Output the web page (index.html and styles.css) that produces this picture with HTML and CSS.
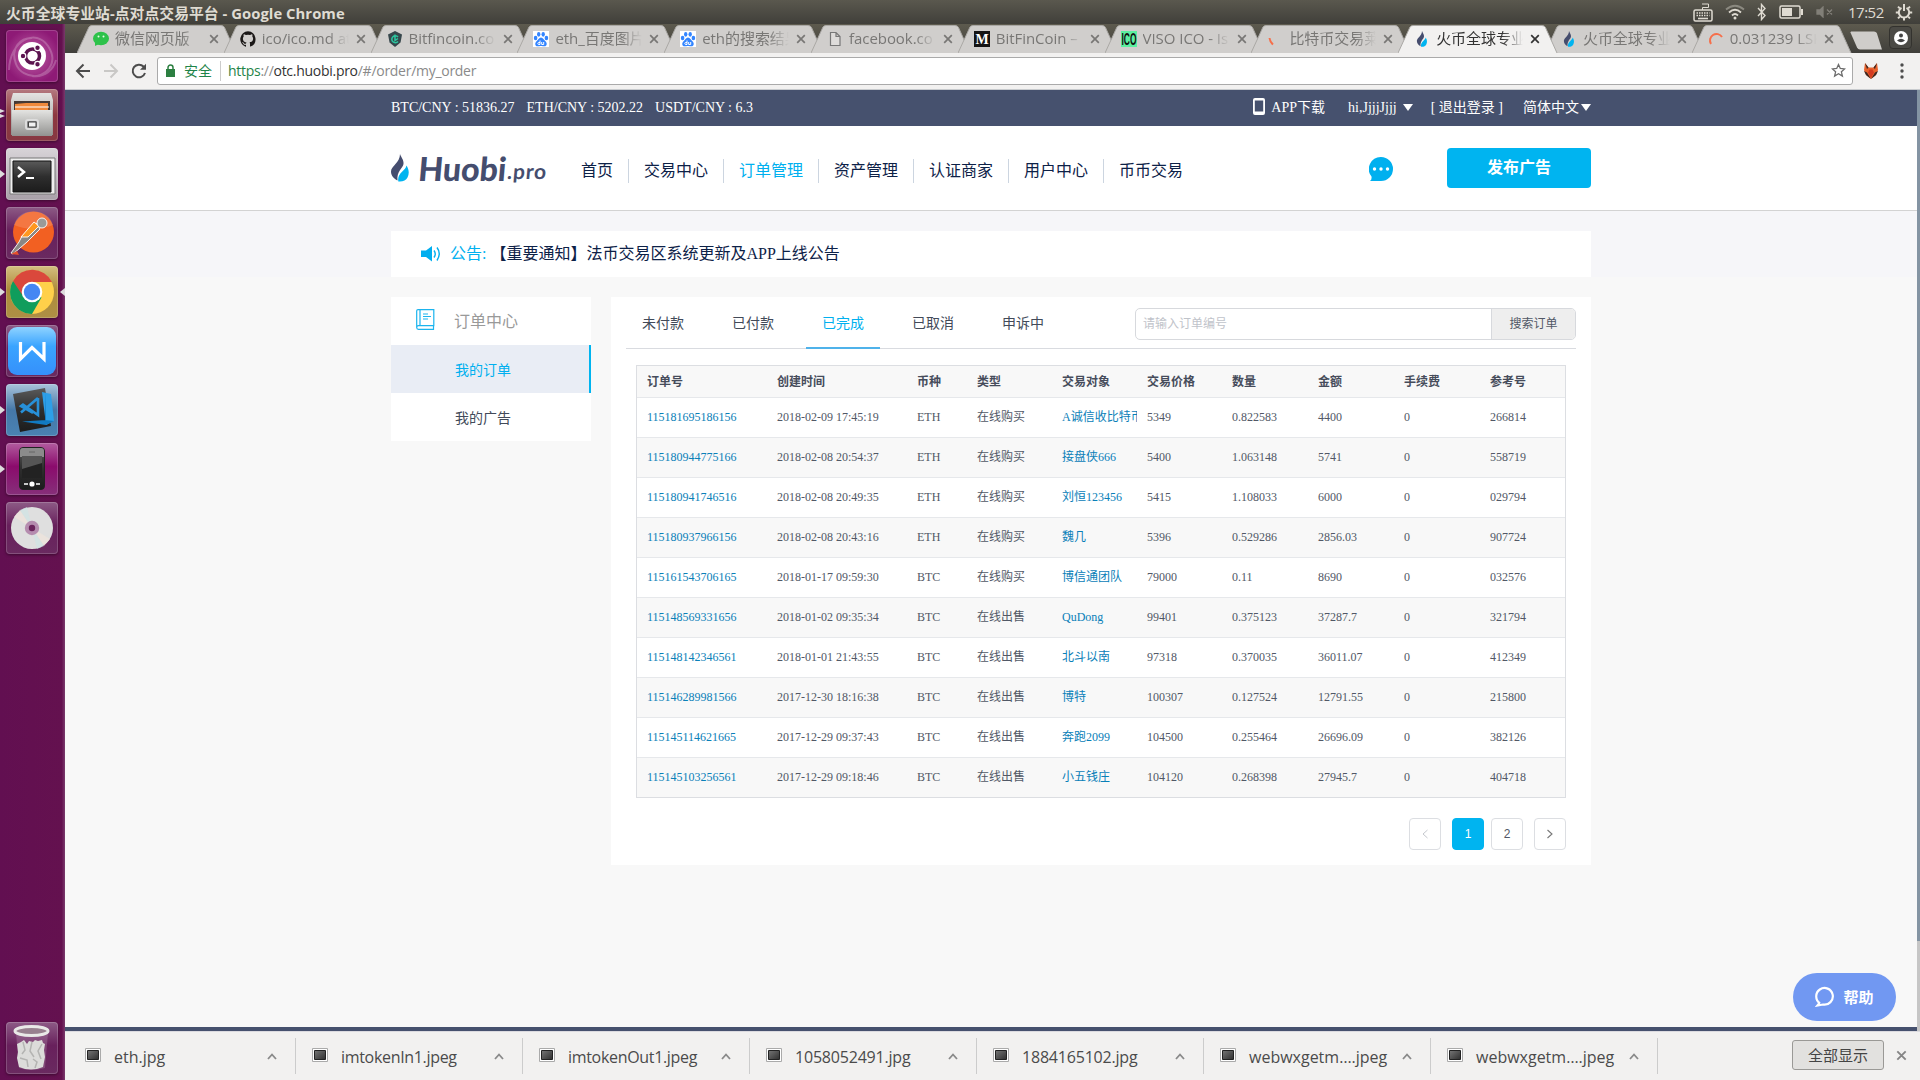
FILE: index.html
```html
<!DOCTYPE html>
<html lang="zh-CN">
<head>
<meta charset="utf-8">
<title>火币全球专业站-点对点交易平台</title>
<link rel="stylesheet" href="styles.css">
</head>
<body>
<svg class="defs" width="0" height="0">
  <defs>
    <linearGradient id="metal" x1="0" y1="0" x2="0" y2="1"><stop offset="0" stop-color="#e4e4e2"/><stop offset="1" stop-color="#929290"/></linearGradient>
    <linearGradient id="dark" x1="0" y1="0" x2="0" y2="1"><stop offset="0" stop-color="#5a5a5a"/><stop offset=".5" stop-color="#2e2e2e"/><stop offset="1" stop-color="#1c1c1c"/></linearGradient>
    <linearGradient id="photo" x1="0" y1="0" x2="1" y2="1"><stop offset="0" stop-color="#777"/><stop offset="1" stop-color="#2e2e2e"/></linearGradient>
    <linearGradient id="wps" x1="0" y1="0" x2="0" y2="1"><stop offset="0" stop-color="#8fd3ff"/><stop offset=".4" stop-color="#3aa4ff"/><stop offset="1" stop-color="#3590fb"/></linearGradient>
    <symbol id="flame" viewBox="0 0 18 28"><path fill="#454d6e" d="M9 0c1 3 4 6 3.500 10C12 14 5.500 17 6.500 26.500 2.500 24.500 0 21.500 0 17.500 0 12 9 9 9 0z"/><path class="flame-drop" d="M15.500 11.500c2.500 4 3 8 1 12-1.500 3-5 4.500-9.200 4-.6-5 1-7 4-10 2-2 3.700-3.600 4.200-6z"/></symbol>
    <symbol id="paw" viewBox="0 0 16 16"><path fill="#fff" d="M0 0h16v16H0z"/><g fill="#3385ff"><ellipse cx="2.600" cy="7" rx="1.800" ry="2.300"/><ellipse cx="5.700" cy="3.300" rx="1.700" ry="2.400"/><ellipse cx="10.200" cy="3.300" rx="1.700" ry="2.400"/><ellipse cx="13.400" cy="7" rx="1.800" ry="2.300"/><path d="M8 6.500c2 0 3 2.500 4.700 4s1.300 4.800-1.200 4.800c-1.500 0-2-.4-3.500-.4s-2 .4-3.500.4C2 15.300 1.600 12 3.300 10.500S6 6.500 8 6.500z"/></g><path fill="none" stroke="#fff" d="M7 9.500v4H5.800a1 1 0 0 1 0-2H7M8.700 11v2.500h2V11"/></symbol>
    <symbol id="close" viewBox="0 0 10 10"><path d="M1.200 1.200l7.600 7.600M8.800 1.200L1.200 8.800" stroke="currentColor" stroke-width="1.700"/></symbol>
    <symbol id="thumb" viewBox="0 0 16 14"><path fill="#fff" stroke="#aaa" d="M.5.5h15v13H.5z"/><path fill="url(#photo)" stroke="#222" d="M2.500 2.500h11v9h-11z"/></symbol>
    <symbol id="caret" viewBox="0 0 10 7"><path d="M1 6l4-4.500L9 6" fill="none" stroke="#8a8a8a" stroke-width="1.800"/></symbol>
    <symbol id="shape" viewBox="0 0 160 28" preserveAspectRatio="none"><path d="M0 28L12 2Q13 .5 15 .5H144Q146.500.5 147.500 2.500L159 28" stroke="#aaa8a5"/></symbol>
  </defs>
</svg>

<header class="menubar">
  <span class="window-title">火币全球专业站-点对点交易平台 - Google Chrome</span>
  <div class="tray">
    <svg width="20" height="24" viewBox="0 0 20 24" fill="none" stroke="#dfdbd2"><rect x="1" y="10" width="18" height="11" rx="1.500" stroke-width="1.500"/><path d="M9.500 10V7.500h6V4H9" /><path d="M3.500 13h13M3.500 15.500h13" stroke-width="1.600" stroke-dasharray="1.500 1"/><path d="M5 18.500h10" stroke-width="1.600"/></svg>
    <svg width="20" height="16" viewBox="0 0 20 16" fill="none" stroke-width="1.800"><path d="M1 5.500Q10-2 19 5.500" stroke="#8b8980"/><path d="M4 8.500Q10 3 16 8.500M7 11.500q3-3 6 0" stroke="#dfdbd2"/><circle cx="10" cy="14" r="1.500" fill="#dfdbd2"/></svg>
    <svg class="bluetooth" width="10" height="18" viewBox="0 0 10 18" fill="none" stroke="#dfdbd2" stroke-width="1.400"><path d="M1 5l7 7.500-3.500 4v-15l3.500 4L1 13"/></svg>
    <svg class="battery" width="25" height="14" viewBox="0 0 25 14"><rect x="1" y="1" width="20" height="12" rx="1.500" fill="none" stroke="#dfdbd2" stroke-width="1.500"/><path d="M3 3h10v8H3zM22 4h2v6h-2z" fill="#dfdbd2"/></svg>
    <svg width="18" height="12" viewBox="0 0 18 12" fill="#817f78" stroke="#817f78"><path d="M1 4h3l3-3v10L4 8H1zM11 3.500l5 5M16 3.500l-5 5" stroke-width="1.300"/></svg>
    <span class="clock">17:52</span>
    <svg class="gear" width="18" height="18" viewBox="0 0 18 18" fill="none" stroke="#dfdbd2" stroke-width="2"><path d="M6.500 4.800a5.200 5.200 0 1 0 5 0M9 1v7"/><path d="M9 14.500v3M.8 9.500h3M14.200 9.500h3M3 3.600l1.800 1.800M15 3.600l-1.800 1.800M3 15.400l1.800-1.800M15 15.400l-1.800-1.800"/></svg>
  </div>
</header>

<div class="desktop">
  <aside class="launcher">
    <div class="tile tile-ubuntu"><svg viewBox="0 0 52 52"><g fill="none" stroke="#fff" stroke-opacity=".22" stroke-width="2"><path d="M3 40C4 10 30-2 42 16s-4 32-16 30M50 30C44 52 16 50 10 34S14 8 26 8"/></g><circle cx="26" cy="26" r="14" fill="#fff"/><circle cx="26.500" cy="26" r="7" fill="none" stroke="#5c1450" stroke-width="3.500"/><g fill="#5c1450" stroke="#fff" stroke-width="1.200"><circle cx="17" cy="26" r="2.800"/><circle cx="31.500" cy="17.800" r="2.800"/><circle cx="31.500" cy="34.200" r="2.800"/></g></svg></div>
    <div class="tile tile-files left-two"><svg viewBox="0 0 52 52"><path d="M7 4h38l2 7v35H5V11z" fill="url(#metal)"/><path d="M8 12h36v10H8z" fill="#453a35"/><path d="M9 15l11-1 22 0v8H9z" fill="#f08a3c"/><path d="M9 18h34" stroke="#fff" stroke-width="1.200"/><path d="M6 21h40v26H6z" fill="url(#metal)"/><rect x="20" y="31" width="12" height="9" rx="2" fill="#888" stroke="#ddd" stroke-width="2"/><path d="M22.500 33h7.500v5h-7.500z" fill="#f2f2f2" stroke="#444"/></svg></div>
    <div class="tile tile-terminal left-one"><svg viewBox="0 0 52 52"><path d="M4 10h45v36H4z" fill="#eee" stroke="#777"/><path d="M7 13h38v31H7z" fill="url(#dark)" stroke="#111"/><path d="M12 19l6 5-6 5" fill="none" stroke="#fff" stroke-width="2.500"/><path d="M20 30h8" stroke="#fff" stroke-width="2"/></svg></div>
    <div class="tile tile-postman"><svg viewBox="0 0 52 52"><circle cx="27.500" cy="25" r="20.500" fill="#f26022"/><path d="M8 18Q12 4 28 4.500 43 5 47 18 28 26 8 18z" fill="#fff" opacity=".15"/><g stroke="#fff" stroke-width=".9"><path d="M16 29L30 16l4 6-13 13-14 12-2-1 8-11z" fill="#8b8784"/><path d="M15 30L28 15l5 4-11 11z" fill="#ff981f"/><circle cx="36" cy="16" r="5" fill="#9a9a98"/></g><path d="M5 47l6-3 2 4z" fill="#e8512c"/></svg></div>
    <div class="tile tile-chrome left-one right-one"><svg viewBox="0 0 52 52"><circle cx="26" cy="26" r="22" fill="#ffd04a"/><path d="M7 15A22 22 0 0 0 26 48l9.500-16.500L26 26z" fill="#109d5c"/><path d="M7 15A22 22 0 0 1 46 16H26a10 10 0 0 0-9 14z" fill="#da483c"/><circle cx="26" cy="26" r="10.300" fill="#fff"/><circle cx="26" cy="26" r="8.200" fill="#4587f3"/></svg></div>
    <div class="tile tile-wps"><svg viewBox="0 0 52 52"><rect x="2" y="2" width="48" height="48" rx="9" fill="url(#wps)"/><path d="M14.500 17v17L26 22.500 38 34V17" fill="none" stroke="#fff" stroke-width="3.200"/></svg></div>
    <div class="tile tile-code left-one"><svg viewBox="0 0 52 52"><path d="M7 10L39 4l6 38-31 6z" fill="url(#dark)"/><path d="M36 8l9 2 3 27-8 4z" fill="#2d9fe8"/><path d="M16 37.500l24-1.500V8l-1 28 9 1-8 4z" fill="#117ac2"/><path d="M32 14v17L17 20.500l-2 1.500 12 7M15 28.500L32 14" fill="none" stroke="#2790d8" stroke-width="2.600"/></svg></div>
    <div class="tile tile-phone left-one"><svg viewBox="0 0 52 52"><rect x="13.500" y="4.500" width="25" height="42" rx="3.500" fill="url(#dark)" stroke="#222"/><path d="M14 8q0-3 3-3h18q3 0 3 3v6H14z" fill="#8b8b8b"/><path d="M23 9h6" stroke="#666"/><path d="M16 13h20v22H16z" fill="#222"/><path d="M16 13h20v7L16 26z" fill="#555"/><path d="M18 41h4M30 41h4" stroke="#fff" stroke-width="1.600"/><circle cx="26" cy="41" r="2.600" fill="#fff"/></svg></div>
    <div class="tile tile-disc"><svg viewBox="0 0 52 52"><circle cx="26" cy="26" r="21" fill="#dfdfdf"/><path d="M26 26L8 15l6-7zM26 26l18 11-6 7z" fill="#f0e4dc" opacity=".7"/><path d="M26 26L14 8l7-3zM26 26l12 18-7 3z" fill="#cfe4e4" opacity=".7"/><circle cx="26" cy="26" r="5.200" fill="#6b245c" stroke="#b58caf" stroke-width="4"/></svg></div>
    <div class="tile tile-trash"><svg viewBox="0 0 52 52"><path d="M10 11l3 35q13 4 26 0l3-35z" fill="#fff" opacity=".16"/><path d="M11 22l4-2 3-2 3 4 2-3 4 1 2-2 3 1 4-1 1 3 2 1-1 6 1 7-2 10q-12 5-24 0l-2-9 1-6z" fill="#dcdcda"/><path d="M17 20l2 8-3 4M26 20l-2 9 4 6M36 22l-4 7 3 8M14 36l7 2 1 7M27 37l4 3-2 6" stroke="#b4b4b2" fill="none" stroke-width="1.500"/><ellipse cx="25.500" cy="9" rx="16.500" ry="4.500" fill="#98808f" stroke="#e9e9e7" stroke-width="3"/></svg></div>
  </aside>

  <div class="browser">
    <div class="tabstrip">
      <div class="tab"><svg class="shape"><use href="#shape"/></svg><svg class="fav" viewBox="0 0 16 16"><ellipse cx="8" cy="7.500" rx="8" ry="6.800" fill="#2dc24a"/><path d="M2 11l0 4 4-2z" fill="#2dc24a"/><g fill="#e8ffe8"><circle cx="5.500" cy="5.500" r="1"/><circle cx="10.500" cy="5.500" r="1"/></g></svg><span class="label">微信网页版</span><svg class="x"><use href="#close"/></svg></div>
      <div class="tab"><svg class="shape"><use href="#shape"/></svg><svg class="fav" viewBox="0 0 16 16"><path fill="#1b1817" d="M8 .2a8 8 0 0 0-2.500 15.500c.4.100.5-.2.500-.4v-1.500c-2.200.5-2.700-1-2.700-1-.4-.9-.9-1.200-.9-1.200-.7-.5.1-.5.100-.5.800.1 1.200.8 1.200.8.7 1.200 1.900.9 2.300.7.100-.5.300-.9.500-1.100-1.800-.2-3.600-.9-3.600-3.900 0-.9.300-1.600.8-2.200-.1-.2-.4-1 .1-2.100 0 0 .7-.2 2.200.8a7.500 7.500 0 0 1 4 0c1.500-1 2.200-.8 2.200-.8.400 1.100.2 1.900.1 2.100.5.600.8 1.300.8 2.200 0 3-1.900 3.700-3.600 3.900.3.300.5.700.5 1.500v2.200c0 .2.100.5.500.4A8 8 0 0 0 8 .2z"/></svg><span class="label">ico/ico.md at</span><svg class="x"><use href="#close"/></svg></div>
      <div class="tab"><svg class="shape"><use href="#shape"/></svg><svg class="fav" viewBox="0 0 16 16"><path d="M8 0l7 3.500-1.500 8L8 16l-5.500-4.500L1 3.500z" fill="#37474c"/><path d="M11 6a3.500 3.500 0 1 0 0 4.500M8 3.500v6l3-2" fill="none" stroke="#2cc7a0" stroke-width="1.500"/></svg><span class="label">Bitfincoin.co</span><svg class="x"><use href="#close"/></svg></div>
      <div class="tab"><svg class="shape"><use href="#shape"/></svg><svg class="fav"><use href="#paw"/></svg><span class="label">eth_百度图片</span><svg class="x"><use href="#close"/></svg></div>
      <div class="tab"><svg class="shape"><use href="#shape"/></svg><svg class="fav"><use href="#paw"/></svg><span class="label">eth的搜索结果</span><svg class="x"><use href="#close"/></svg></div>
      <div class="tab"><svg class="shape"><use href="#shape"/></svg><svg class="fav" viewBox="0 0 16 16"><path d="M3.500 1.500h5.500l4 4v9H3.500zM9 1.500v4h4" fill="#dedcda" stroke="#777" stroke-width="1.200"/></svg><span class="label">facebook.co</span><svg class="x"><use href="#close"/></svg></div>
      <div class="tab"><svg class="shape"><use href="#shape"/></svg><svg class="fav" viewBox="0 0 16 16"><path d="M0 0h16v16H0z" fill="#141414"/><text x="8" y="13" text-anchor="middle" font-family="Liberation Serif" font-weight="700" font-size="14" fill="#fff">M</text></svg><span class="label">BitFinCoin –</span><svg class="x"><use href="#close"/></svg></div>
      <div class="tab"><svg class="shape"><use href="#shape"/></svg><svg class="fav" viewBox="0 0 16 16"><path d="M0 0h16v16H0z" fill="#5cf0a0"/><text x=".5" y="14" textLength="15" lengthAdjust="spacingAndGlyphs" font-family="Liberation Sans Narrow, Liberation Sans" font-weight="700" font-size="17" fill="#111">ICO</text></svg><span class="label">VISO ICO - Is</span><svg class="x"><use href="#close"/></svg></div>
      <div class="tab"><svg class="shape"><use href="#shape"/></svg><svg class="fav" viewBox="0 0 16 16"><path d="M2.500 7q.5 4 3.500 6.500" fill="none" stroke="#f66f4a" stroke-width="2"/></svg><span class="label">比特币交易莱</span><svg class="x"><use href="#close"/></svg></div>
      <div class="tab active"><svg class="shape"><use href="#shape"/></svg><svg class="fav"><use href="#flame"/></svg><span class="label">火币全球专业</span><svg class="x"><use href="#close"/></svg></div>
      <div class="tab"><svg class="shape"><use href="#shape"/></svg><svg class="fav"><use href="#flame"/></svg><span class="label">火币全球专业</span><svg class="x"><use href="#close"/></svg></div>
      <div class="tab"><svg class="shape"><use href="#shape"/></svg><svg class="fav" viewBox="0 0 16 16"><path d="M3 13A6.500 6.500 0 1 1 14 6" fill="none" stroke="#f66f4a" stroke-width="2"/></svg><span class="label">0.031239 LSK</span><svg class="x"><use href="#close"/></svg></div>
      <svg class="newtab" width="34" height="20" viewBox="0 0 34 20"><path d="M2 .5h23q2 0 2.800 1.500L33 18.500H11q-2 0-3-2L1.500 1.500z" fill="#cfcdca"/></svg>
      <div class="profile"><svg width="14" height="14" viewBox="0 0 14 14"><circle cx="7" cy="7" r="7" fill="#fff"/><circle cx="7" cy="4.600" r="2" fill="#444"/><path d="M3 9.500q4-3.500 8 0Q7 13 3 9.500z" fill="#444"/></svg></div>
    </div>

    <div class="toolbar">
      <svg width="16" height="16" viewBox="0 0 16 16" fill="none" stroke="#4c4c4c" stroke-width="2"><path d="M15 8H2M8.500 1.500L2 8l6.500 6.500"/></svg>
      <svg width="16" height="16" viewBox="0 0 16 16" fill="none" stroke="#c9c8c6" stroke-width="2"><path d="M1 8h13M7.500 1.500L14 8l-6.500 6.500"/></svg>
      <svg width="16" height="16" viewBox="0 0 16 16" fill="none" stroke="#4c4c4c" stroke-width="2"><path d="M14 10A6.300 6.300 0 1 1 12.500 3.500l1.500 1.500"/><path d="M15 .8v6H9z" fill="#4c4c4c" stroke="none"/></svg>
      <div class="omnibox">
        <svg width="9" height="13" viewBox="0 0 9 13"><path d="M0 5h9v8H0z" fill="#2c7f41"/><path d="M2 5.500V3.500a2.500 2.500 0 0 1 5 0v2" fill="none" stroke="#2c7f41" stroke-width="1.500"/></svg>
        <span class="secure">安全</span>
        <span class="url"><span class="scheme">https</span>://<b>otc.huobi.pro</b>/#/order/my_order</span>
        <svg class="star" width="15" height="15" viewBox="0 0 15 15"><path d="M7.500 1.500l1.800 4 4.300.4-3.200 2.900 1 4.300-3.900-2.300-3.900 2.300 1-4.300L1.400 5.900l4.300-.4z" fill="none" stroke="#6c6c6c" stroke-width="1.300"/></svg>
      </div>
      <svg class="fox" width="16" height="16" viewBox="0 0 16 16"><path d="M2 0l3.500 4.500h5L14 0l1 7-2 5-5 4-5-4-2-5z" fill="#e8622c"/><path d="M1 8l3 1.500L8 16l-5-4zM15 8l-3 1.500L8 16l5-4zM2 0l3.500 4.500L4 6zM14 0l-3.500 4.500L12 6z" fill="#3a2722"/><path d="M5 9.500L8 15l3-5.500-1.500-3h-3z" fill="#d43a20"/></svg>
      <svg width="4" height="16" viewBox="0 0 4 16" fill="#4c4c4c"><circle cx="2" cy="2" r="1.700"/><circle cx="2" cy="8" r="1.700"/><circle cx="2" cy="14" r="1.700"/></svg>
    </div>

    <div class="viewport">
      <div class="page">
        <div class="ticker">
          <div class="wrap">
            <span class="rate">BTC/CNY : 51836.27</span><span class="rate">ETH/CNY : 5202.22</span><span class="rate">USDT/CNY : 6.3</span>
            <div class="account">
              <svg class="mobile" width="12" height="17" viewBox="0 0 12 17"><path fill-rule="evenodd" fill="#fff" d="M2 0h8q2 0 2 2v13q0 2-2 2H2q-2 0-2-2V2Q0 0 2 0zM1.800 2.500v11h8.400v-11z"/></svg>
              <span class="app">APP下载</span>
              <span class="user">hi,JjjjJjjj</span><i class="down"></i>
              <span class="logout">[ 退出登录 ]</span>
              <span class="lang">简体中文</span><i class="down"></i>
            </div>
          </div>
        </div>
        <div class="masthead">
          <div class="wrap">
            <svg class="logo" width="156" height="36" viewBox="0 0 156 36"><svg x="0" y="2" width="18" height="28"><use href="#flame"/></svg><g fill="#454d6e" font-family="Lato, sans-serif" font-weight="700"><text x="29" y="29" font-size="33" textLength="88" lengthAdjust="spacingAndGlyphs" font-weight="900" transform="skewX(-5)">Huobi</text><text x="118" y="27" font-size="21" textLength="39" transform="skewX(-5)">.pro</text></g></svg>
            <nav class="nav"><a>首页</a><a>交易中心</a><a class="on">订单管理</a><a>资产管理</a><a>认证商家</a><a>用户中心</a><a>币币交易</a></nav>
            <svg class="chat" width="24" height="24" viewBox="0 0 24 24"><path d="M12 0a12 12 0 1 1 0 24H1q2-1.500 1.500-4.500A12 12 0 0 1 12 0z" fill="#00b0ef"/><g fill="#fff"><circle cx="5.500" cy="12" r="1.700"/><circle cx="12" cy="12" r="1.700"/><circle cx="18.500" cy="12" r="1.700"/></g></svg>
            <button class="publish">发布广告</button>
          </div>
        </div>
        <div class="notice-band">
          <div class="notice">
            <svg width="20" height="16" viewBox="0 0 20 16"><path d="M0 4.500h5L11 0v15.500L5 11H0z" fill="#00aeef"/><path d="M13 4.500q2.500 3.300 0 7M16 1.500q4.500 6 0 13" fill="none" stroke="#00aeef" stroke-width="1.400"/></svg>
            <span class="notice-tag">公告:</span><span>【重要通知】法币交易区系统更新及APP上线公告</span>
          </div>
        </div>
        <div class="columns">
          <aside class="side">
            <div class="side-head"><svg width="19" height="21" viewBox="0 0 19 21" fill="none" stroke="#1bb4ee" stroke-width="1.200"><path d="M.7 18.500V2Q.7.700 2 .7h15.800v16H2.500q-1.800 0-1.800 1.800T2.500 20.300H17.500v-3.500M4 .7v16"/><path d="M7 5h5M7 7.500h8M7 10h5"/></svg><span>订单中心</span></div>
            <a class="side-item on">我的订单</a>
            <a class="side-item">我的广告</a>
          </aside>
          <main class="panel">
            <div class="panel-tabs">
              <a>未付款</a><a>已付款</a><a class="on">已完成</a><a>已取消</a><a>申诉中</a>
              <div class="search"><span class="field">请输入订单编号</span><button>搜索订单</button></div>
            </div>
            <table class="orders">
              <colgroup><col class="c-id"><col class="c-time"><col class="c-coin"><col class="c-mid"><col class="c-mid"><col class="c-mid"><col class="c-num"><col class="c-num"><col class="c-num"><col class="c-mid"></colgroup>
              <thead><tr><th>订单号</th><th>创建时间</th><th>币种</th><th>类型</th><th>交易对象</th><th>交易价格</th><th>数量</th><th>金额</th><th>手续费</th><th>参考号</th></tr></thead>
              <tbody>
                <tr><td><a>115181695186156</a></td><td>2018-02-09 17:45:19</td><td>ETH</td><td>在线购买</td><td><a>A诚信收比特币</a></td><td>5349</td><td>0.822583</td><td>4400</td><td>0</td><td>266814</td></tr>
                <tr><td><a>115180944775166</a></td><td>2018-02-08 20:54:37</td><td>ETH</td><td>在线购买</td><td><a>接盘侠666</a></td><td>5400</td><td>1.063148</td><td>5741</td><td>0</td><td>558719</td></tr>
                <tr><td><a>115180941746516</a></td><td>2018-02-08 20:49:35</td><td>ETH</td><td>在线购买</td><td><a>刘恒123456</a></td><td>5415</td><td>1.108033</td><td>6000</td><td>0</td><td>029794</td></tr>
                <tr><td><a>115180937966156</a></td><td>2018-02-08 20:43:16</td><td>ETH</td><td>在线购买</td><td><a>魏几</a></td><td>5396</td><td>0.529286</td><td>2856.03</td><td>0</td><td>907724</td></tr>
                <tr><td><a>115161543706165</a></td><td>2018-01-17 09:59:30</td><td>BTC</td><td>在线购买</td><td><a>博信通团队</a></td><td>79000</td><td>0.11</td><td>8690</td><td>0</td><td>032576</td></tr>
                <tr><td><a>115148569331656</a></td><td>2018-01-02 09:35:34</td><td>BTC</td><td>在线出售</td><td><a>QuDong</a></td><td>99401</td><td>0.375123</td><td>37287.7</td><td>0</td><td>321794</td></tr>
                <tr><td><a>115148142346561</a></td><td>2018-01-01 21:43:55</td><td>BTC</td><td>在线出售</td><td><a>北斗以南</a></td><td>97318</td><td>0.370035</td><td>36011.07</td><td>0</td><td>412349</td></tr>
                <tr><td><a>115146289981566</a></td><td>2017-12-30 18:16:38</td><td>BTC</td><td>在线出售</td><td><a>博特</a></td><td>100307</td><td>0.127524</td><td>12791.55</td><td>0</td><td>215800</td></tr>
                <tr><td><a>115145114621665</a></td><td>2017-12-29 09:37:43</td><td>BTC</td><td>在线出售</td><td><a>奔跑2099</a></td><td>104500</td><td>0.255464</td><td>26696.09</td><td>0</td><td>382126</td></tr>
                <tr><td><a>115145103256561</a></td><td>2017-12-29 09:18:46</td><td>BTC</td><td>在线出售</td><td><a>小五钱庄</a></td><td>104120</td><td>0.268398</td><td>27945.7</td><td>0</td><td>404718</td></tr>
              </tbody>
            </table>
            <div class="pager">
              <a class="prev"><svg width="8" height="10" viewBox="0 0 8 10"><path d="M6.500 1L2 5l4.500 4" fill="none" stroke="#c5c8ce"/></svg></a>
              <a class="on">1</a>
              <a>2</a>
              <a class="next"><svg width="8" height="10" viewBox="0 0 8 10"><path d="M1.500 1L6 5 1.500 9" fill="none" stroke="#777" stroke-width="1.100"/></svg></a>
            </div>
          </main>
        </div>
        <div class="footer-edge"></div>
        <button class="help"><svg width="21" height="21" viewBox="0 0 21 21"><path d="M5 17.300A8.300 8.300 0 1 1 8 18.500L2.500 19.500 4.500 17" fill="none" stroke="#fff" stroke-width="2.200"/></svg>帮助</button>
      </div>
      <div class="scrollbar"></div>
    </div>

    <div class="shelf">
      <div class="download"><svg class="thumb"><use href="#thumb"/></svg><span>eth.jpg</span><svg class="caret"><use href="#caret"/></svg></div>
      <div class="download"><svg class="thumb"><use href="#thumb"/></svg><span class="tight">imtokenIn1.jpeg</span><svg class="caret"><use href="#caret"/></svg></div>
      <div class="download"><svg class="thumb"><use href="#thumb"/></svg><span class="tight">imtokenOut1.jpeg</span><svg class="caret"><use href="#caret"/></svg></div>
      <div class="download"><svg class="thumb"><use href="#thumb"/></svg><span class="snug">1058052491.jpg</span><svg class="caret"><use href="#caret"/></svg></div>
      <div class="download"><svg class="thumb"><use href="#thumb"/></svg><span class="snug">1884165102.jpg</span><svg class="caret"><use href="#caret"/></svg></div>
      <div class="download"><svg class="thumb"><use href="#thumb"/></svg><span>webwxgetm….jpeg</span><svg class="caret"><use href="#caret"/></svg></div>
      <div class="download"><svg class="thumb"><use href="#thumb"/></svg><span>webwxgetm….jpeg</span><svg class="caret"><use href="#caret"/></svg></div>
      <button class="show-all">全部显示</button>
      <svg class="shelf-close"><use href="#close"/></svg>
    </div>
  </div>
</div>
</body>
</html>
```
FILE: styles.css
```css
* { box-sizing: border-box; }
body { margin: 0; width: 1920px; height: 1080px; overflow: hidden; display: flex; flex-direction: column; font-family: "Open Sans", "Noto Sans CJK SC", sans-serif; }
svg { display: block; flex: none; }
button { font: inherit; border: 0; margin: 0; padding: 0; }
.defs { position: absolute; }

/* desktop menu bar */
.menubar { flex: none; height: 24px; display: flex; justify-content: space-between; align-items: center; padding: 0 7px 0 6px; background: linear-gradient(#5a584e, #403f3a); color: #dfdbd2; }
.window-title { font-size: 14.800px; font-weight: 700; white-space: nowrap; line-height: 24px; letter-spacing: .05px; padding-top: 1px; }
.tray { display: flex; align-items: center; height: 24px; }
.tray svg + svg { margin-left: 12px; }
.clock { font-size: 15px; width: 35px; margin: 0 12px 0 14px; letter-spacing: -.5px; }

.desktop { flex: 1; display: flex; min-height: 0; }

/* launcher */
.launcher { flex: none; width: 65px; display: flex; flex-direction: column; gap: 7px; padding: 6px 6px; background: linear-gradient(90deg, #620f51, #64114f 95%, #7a3a6c); }
.tile { position: relative; width: 52px; height: 52px; border-radius: 4px; background: linear-gradient(#8d5b86, #68205c 45%, #6a2a60); box-shadow: inset 0 0 0 1px rgba(255,255,255,.18), 0 1px 3px rgba(0,0,0,.4); }
.tile svg { width: 52px; height: 52px; }
.tile-ubuntu { background: radial-gradient(circle, #c060a8, #8e1a76 75%); }
.tile-files { background: linear-gradient(#b57a80, #8d3840 50%, #873842); }
.tile-terminal { background: linear-gradient(#d8d4d8, #a8a0a8); }
.tile-chrome { background: linear-gradient(#d4bf80, #ae8c3b 45%, #ae8f45); }
.tile-code { background: linear-gradient(#a9c3da, #4578a8 50%, #4a82b2); }
.tile-phone { background: linear-gradient(#b25c9f, #8b0b6c 45%, #86307a); }
.tile-trash { margin-top: auto; }
.left-one::before, .left-two::before, .left-two::after { content: ""; position: absolute; left: -6px; top: 22px; border: 4px solid transparent; border-left: 5px solid #ddd; border-right: 0; }
.left-two::before { top: 20px; border-width: 2px 0 2px 5px; }
.left-two::after { top: 25px; border-width: 2px 0 2px 5px; }
.right-one::after { content: ""; position: absolute; right: -7px; top: 22px; border: 4px solid transparent; border-right: 5px solid #ddd; border-left: 0; }

/* browser frame */
.browser { flex: 1; min-width: 0; display: flex; flex-direction: column; }
.tabstrip { flex: none; height: 29px; display: flex; padding: 1px 8px 0 12px; background: linear-gradient(#5d5a4e, #403f3b); }
.tab { position: relative; flex: none; width: 146.800px; height: 28px; display: flex; align-items: center; padding: 0 0 1px 16px; color: #787775; fill: #d0cecc; }
.tab .shape { position: absolute; left: 0; top: 0; width: 160px; height: 28px; }
.tab.active { z-index: 1; color: #333; fill: #f2f1f0; }
.tab .fav { position: relative; width: 16px; height: 16px; fill: #47aee8; }
.tab .label { position: relative; width: 87px; margin-left: 6px; overflow: hidden; white-space: nowrap; font-size: 15px; line-height: 24px; padding-bottom: 1px; letter-spacing: -.05px; mask-image: linear-gradient(90deg, #000 76%, transparent 100%); }
.tab .x { position: relative; width: 10px; height: 10px; margin-left: 7px; }
.flame-drop { fill: #00b4f0; }
.newtab { margin: 6px 0 0 10px; }
.profile { width: 23px; height: 23px; margin: 1px 0 0 auto; border: 1px solid #33322e; border-radius: 4px; display: grid; place-items: center; background: #4b4a45; }

.toolbar { flex: none; height: 37px; display: flex; align-items: center; gap: 12px; padding: 0 16px 1px 10px; background: #f2f1f0; border-bottom: 1px solid #c8cbce; }
.omnibox { flex: 1; height: 28px; display: flex; align-items: center; padding: 0 6px 0 8px; margin-left: -2px; background: #fff; border: 1px solid #aaa; border-radius: 3px; font-size: 14px; }
.secure { color: #1f8449; margin-left: 9px; padding-right: 8px; border-right: 1px solid #ccc; line-height: 20px; }
.url { margin-left: 7px; color: #8a8a8a; letter-spacing: -.28px; }
.url b { font-weight: 400; color: #333; }
.url .scheme { color: #1f8449; }
.star { margin-left: auto; }
.fox { margin: 0 9px 0 -2px; }

/* page */
.viewport { flex: 1; min-height: 0; display: flex; }
.page { position: relative; flex: 1; display: flex; flex-direction: column; background: #f8f8f8; font-family: "Liberation Serif", "Noto Sans CJK SC", serif; }
.scrollbar { flex: none; width: 3px; background: linear-gradient(#8494a3 851px, #c6c6c6 851px); }
.wrap { width: 1200px; height: 100%; margin: 0 auto; display: flex; align-items: center; }
.ticker { flex: none; height: 36px; background: #46516e; color: #fff; font-size: 14px; line-height: 34px; }
.rate { margin-right: 12px; }
.account { margin-left: auto; display: flex; align-items: center; }
.account .mobile { margin-bottom: 4px; }
.account .app { margin: 0 23px 0 6px; }
.account .logout { margin: 0 20px 0 18px; }
.down { border: 5px solid transparent; border-top: 7px solid #fff; border-bottom: 0; margin: 0 0 2px 2px; }
.user + .down { margin-left: 6px; }

.masthead { flex: none; height: 85px; background: #fff; border-bottom: 1px solid #d3d3d3; }
.masthead .wrap { align-items: flex-start; }
.logo { margin-top: 26px; }
.nav { display: flex; margin: 33px 0 0 19px; font-size: 16px; line-height: 24px; color: #0d2147; }
.nav a { padding: 0 15px; height: 24px; border-right: 1px solid #ccd5e0; }
.nav a:last-child { border: 0; }
.nav .on, .notice-tag { color: #00b0ef; }
.chat { margin: 31px 54px 0 auto; }
.publish { width: 144px; height: 40px; margin-top: 22px; padding-bottom: 5px; background: #00b4f0; color: #fff; border-radius: 4px; font: 700 16px/34px "Noto Sans CJK SC", sans-serif; }

.notice-band { flex: none; height: 66px; padding-top: 20px; background: #f6f6f9; }
.notice { width: 1200px; height: 46px; margin: 0 auto; display: flex; align-items: center; padding: 0 30px; background: #fff; font-size: 16px; line-height: 44px; color: #0d2147; }
.notice-tag { margin: 0 4px 0 9px; }

.columns { width: 1200px; margin: 20px auto 0; display: flex; align-items: flex-start; gap: 20px; }
.side { width: 200px; background: #fff; }
.side-head { height: 48px; display: flex; align-items: center; gap: 19px; padding: 0 0 3px 25px; font-size: 16px; color: #999; }
.side-item { display: block; height: 48px; line-height: 51px; padding-left: 64px; font-size: 14px; color: #424a59; }
.side-item.on { background: #e9edf5; color: #00b0ef; border-right: 2px solid #00b4f0; }

.panel { width: 980px; height: 568px; background: #fff; padding: 0 15px; }
.panel-tabs { display: flex; height: 52px; border-bottom: 1px solid #d9dbe0; }
.panel-tabs a { height: 52px; margin-right: 16px; padding: 0 16px; font-size: 14px; line-height: 53px; color: #424a59; }
.panel-tabs a.on { color: #00b0ef; border-bottom: 2px solid #4fb2ea; }
.search { display: flex; width: 441px; height: 32px; margin: 11px 0 0 auto; border: 1px solid #d7d9dd; border-radius: 5px; overflow: hidden; font-size: 12px; line-height: 30px; }
.field { flex: 1; padding-left: 7px; color: #bfc3ca; }
.search button { width: 84px; background: #eee; color: #515866; border-left: 1px solid #d7d9dd; }

.orders { width: 930px; margin: 16px 0 0 10px; table-layout: fixed; border-collapse: separate; border-spacing: 0; border: 1px solid #dcdee2; border-bottom: 0; font-size: 12px; color: #515866; }
.c-id { width: 130px; }
.c-time { width: 140px; }
.c-coin { width: 60px; }
.c-mid { width: 85px; }
.c-num { width: 86px; }
.orders th, .orders td { padding: 0 0 0 10px; text-align: left; white-space: nowrap; overflow: hidden; border-bottom: 1px solid #e6e8eb; }
.orders th { height: 32px; line-height: 30px; background: #f8f8f8; color: #464c5b; }
.orders td { height: 40px; line-height: 36px; padding-bottom: 2px; }
.orders tr:nth-child(even) td { background: #f8f8f8; }
.orders tr:last-child td { border-color: #dcdee2; }
.orders a { color: #0a80b8; }

.pager { display: flex; justify-content: flex-end; gap: 7px; margin-top: 20px; padding-right: 10px; font: 12px/30px "Liberation Sans", sans-serif; color: #515866; }
.pager a { width: 32px; height: 32px; border: 1px solid #dcdee2; border-radius: 4px; display: flex; justify-content: center; align-items: center; }
.pager .on { background: #00b4f0; border-color: #00b4f0; color: #fff; }
.pager .prev { margin-right: 4px; }
.pager .next { margin-left: 4px; }

.footer-edge { flex: none; height: 4px; margin-top: auto; background: #46516e; }
.help { position: absolute; right: 21px; bottom: 10px; width: 103px; height: 48px; border-radius: 24px; padding-bottom: 1px; background: #7198f2; color: #fff; display: flex; justify-content: center; align-items: center; gap: 7px; font: 700 15px "Noto Sans CJK SC", sans-serif; }

/* downloads shelf */
.shelf { flex: none; height: 49px; display: flex; align-items: center; padding: 0 7px 0 4px; background: #f2f1f0; border-top: 1px solid #dcdbe0; }
.download { flex: none; width: 227px; height: 36px; display: flex; align-items: center; padding: 0 18px 0 16px; border-right: 1px solid #ccc; font-size: 16px; color: #4b4b4b; }
.download span { margin-left: 13px; padding-top: 2px; white-space: nowrap; }
.download .tight { letter-spacing: -.32px; }
.download .snug { letter-spacing: -.2px; }
.thumb { width: 16px; height: 14px; margin-bottom: 3px; }
.caret { width: 10px; height: 7px; margin-left: auto; }
.show-all { width: 92px; height: 30px; margin: 0 12px 3px auto; border: 1px solid #9a9996; border-radius: 3px; background: #e2e1df; color: #444; font-size: 15px; line-height: 26px; }
.shelf-close { width: 11px; height: 11px; color: #858585; margin: 0 6px 2px 0; }
```
